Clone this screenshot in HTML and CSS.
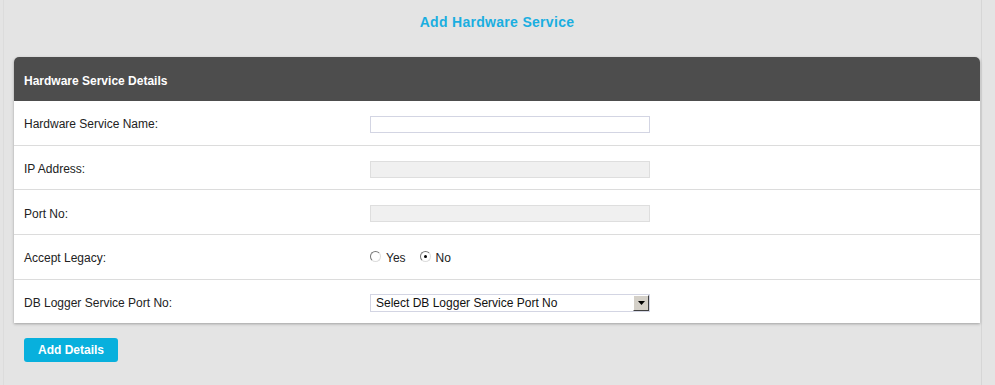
FILE: index.html
```html
<!DOCTYPE html>
<html lang="en">
<head>
    <meta charset="UTF-8">
    <title>Add Hardware Service</title>
    <link rel="stylesheet" href="styles.css">
</head>
<body>
    <div class="page">
        <h1 class="page-title">Add Hardware Service</h1>
        <div class="card">
            <div class="card-header">Hardware Service Details</div>
            <div class="row">
                <label class="label">Hardware Service Name:</label>
                <input type="text" class="field">
            </div>
            <div class="row">
                <label class="label">IP Address:</label>
                <input type="text" class="field" disabled>
            </div>
            <div class="row">
                <label class="label">Port No:</label>
                <input type="text" class="field" disabled>
            </div>
            <div class="row">
                <label class="label">Accept Legacy:</label>
                <div class="radios">
                    <label class="radio"><span class="dot"></span>Yes</label>
                    <label class="radio"><span class="dot checked"></span>No</label>
                </div>
            </div>
            <div class="row last">
                <label class="label">DB Logger Service Port No:</label>
                <div class="select">
                    <span class="select-text">Select DB Logger Service Port No</span>
                    <span class="select-btn">
                        <svg width="7" height="4" viewBox="0 0 7 4"><path d="M0 0h7L3.5 4z" fill="#000"/></svg>
                    </span>
                </div>
            </div>
        </div>
        <button class="btn">Add Details</button>
    </div>
</body>
</html>
```

FILE: styles.css
```css
body {
    margin: 0;
    background: #e4e4e4;
    font-family: "Liberation Sans", Arial, sans-serif;
    font-size: 12px;
    color: #222;
}

.page {
    margin: 0 13px 0 3px;
    border-left: 1px solid #dcdcdc;
    border-right: 1px solid #d6d6d6;
    padding: 13px 1px 21px 10px;
    height: 351px;
}

.page-title {
    margin: 0 0 25px;
    text-align: center;
    font-size: 14px;
    font-weight: bold;
    color: #1aaee0;
    letter-spacing: 0.3px;
    line-height: 19px;
}

.card {
    background: #fff;
    border-radius: 5px 5px 0 0;
    box-shadow: 0 1px 3px rgba(0, 0, 0, 0.3);
}

.card-header {
    background: #4d4d4d;
    color: #fff;
    font-weight: bold;
    height: 44px;
    line-height: 49px;
    padding-left: 10px;
    border-radius: 5px 5px 0 0;
}

.row {
    display: flex;
    align-items: center;
    height: 43.7px;
    padding-left: 10px;
    border-bottom: 1px solid #dcdcdc;
}

.row.last {
    border-bottom: none;
}

.label {
    width: 346px;
    padding-top: 3px;
}

.field {
    width: 280px;
    height: 17px;
    box-sizing: border-box;
    margin: 3px 0 0;
    border: 1px solid #d3d5e3;
    background: #fff;
    padding: 0;
}

.field:disabled {
    background: #f0f0f0;
    border-color: #dedede;
}

.radios {
    display: flex;
    gap: 14px;
    padding-top: 3px;
}

.radio {
    display: flex;
    align-items: center;
    gap: 5px;
}

.dot {
    width: 9px;
    height: 9px;
    border-radius: 50%;
    border: 1px solid #777;
    border-right-color: #ddd;
    border-bottom-color: #ddd;
    background: #fff;
    position: relative;
    top: -2px;
}

.dot.checked::after {
    content: "";
    position: absolute;
    left: 3px;
    top: 3px;
    width: 3px;
    height: 3px;
    border-radius: 50%;
    background: #000;
}

.select {
    display: flex;
    width: 280px;
    height: 18px;
    box-sizing: border-box;
    border: 1px solid #d3d5e3;
    margin-top: 3px;
}

.select-text {
    flex: 1;
    padding-left: 5px;
    line-height: 16px;
    color: #111;
}

.select-btn {
    width: 16px;
    display: flex;
    align-items: center;
    justify-content: center;
    background: #d4d0c8;
    box-sizing: border-box;
    border: 1px solid;
    border-color: #fff #404040 #404040 #fff;
}

.btn {
    margin-top: 15px;
    margin-left: 10px;
    width: 94px;
    height: 24px;
    border: none;
    border-radius: 3px;
    background: #08b0dd;
    color: #fff;
    font-family: "Liberation Sans", Arial, sans-serif;
    font-size: 12px;
    font-weight: bold;
}
```
